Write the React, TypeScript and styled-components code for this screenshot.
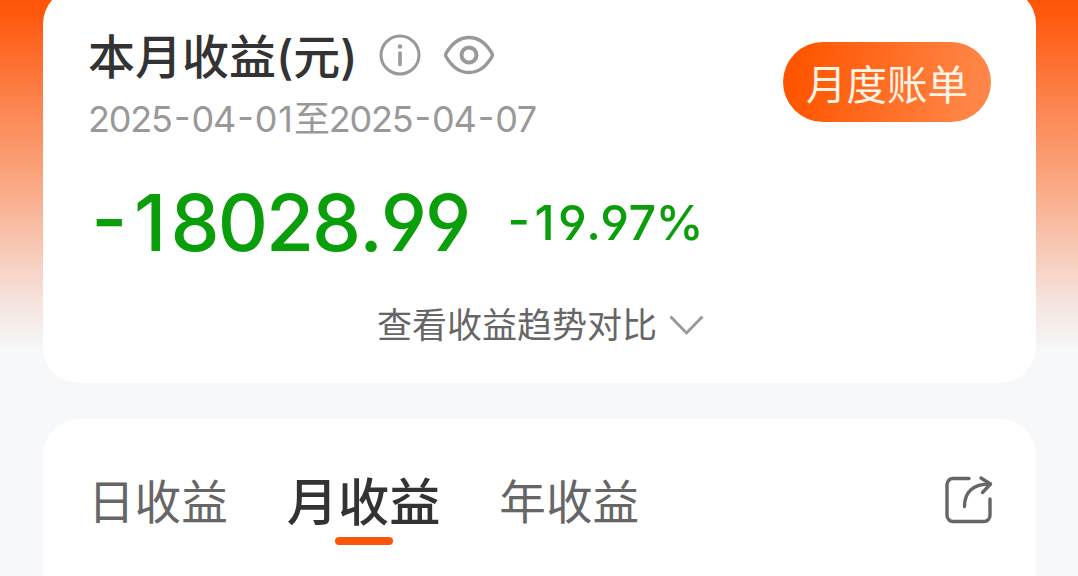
import React, { useState } from 'react';
import styled, { createGlobalStyle } from 'styled-components';

const GlobalStyle = createGlobalStyle`
  * {
    box-sizing: border-box;
  }

  body {
    margin: 0;
    overflow: hidden;
    background: #f6f8fa;
    font-family: Inter, 'Noto Sans CJK SC', sans-serif;
  }

  button {
    border: none;
    padding: 0;
    background: none;
    font-family: inherit;
    cursor: pointer;
  }
`;

const Page = styled.div`
  display: flex;
  flex-direction: column;
  gap: 36.5px;
  height: 576px;
  padding: 0 42px 0 43px;
  overflow: hidden;
  background: linear-gradient(
    180deg,
    #ff5508 0,
    #ff5a10 18px,
    #fc8753 110px,
    #faa680 180px,
    #f8c4af 240px,
    #f6e2dc 300px,
    #f6f8fa 350px
  );
`;

const Card = styled.section`
  flex-shrink: 0;
  background: #fff;
  border-radius: 36px;
`;

const SummaryCard = styled(Card)`
  height: 394.5px;
  margin-top: -12px;
  padding: 40px 45px 0 45px;
`;

const Header = styled.div`
  display: flex;
  justify-content: space-between;
  align-items: flex-start;
`;

const TitleRow = styled.div`
  display: flex;
  align-items: center;
  height: 54px;
`;

const Title = styled.h1`
  width: 291px;
  margin: 0;
  padding-top: 4px;
  color: #333;
  font-size: 47px;
  font-weight: 500;
  line-height: 54px;
  white-space: nowrap;
`;

const IconButton = styled.button<{ $gap?: number }>`
  display: flex;
  margin-left: ${({ $gap }) => $gap || 0}px;
`;

const DateRange = styled.div`
  margin-top: 16px;
  color: #999;
  font-size: 36px;
  line-height: 42px;
  letter-spacing: -1.2px;
  font-feature-settings: 'case';
  font-kerning: none;
  white-space: nowrap;
`;

const BillButton = styled.button`
  width: 208px;
  height: 80px;
  margin-top: 14px;
  padding-top: 7px;
  border-radius: 40px;
  background: linear-gradient(100deg, #ff5500 8%, #ff8648 92%);
  color: #fff3e6;
  font-size: 40.5px;
  line-height: 73px;
`;

const Figures = styled.div`
  display: flex;
  align-items: center;
  height: 80px;
  margin-top: 42px;
  color: #0a9f0a;
  font-weight: 500;
  font-feature-settings: 'case', 'cv04', 'cv09';
  font-kerning: none;
  white-space: nowrap;
`;

const Amount = styled.div`
  width: 418px;
  padding-left: 1px;
  font-size: 78px;
  letter-spacing: -2px;
`;

const Percent = styled.div`
  font-size: 48.5px;
  letter-spacing: -0.6px;
`;

// narrow glyphs get side room so the digits sit on an even pitch
const Narrow = styled.span`
  margin: 0 0.06em;

  ${Figures} & {
    margin: 0 0.08em 0 0.03em;
  }
`;

const TrendLink = styled.button`
  display: flex;
  align-items: center;
  gap: 12px;
  height: 44px;
  margin: 41px 0 0 289px;
  color: #666;
  font-size: 35px;
  line-height: 44px;
`;

const TabsCard = styled(Card)`
  display: flex;
  justify-content: space-between;
  height: 220px;
  padding: 48px 42px 0 45px;
`;

const TabList = styled.div`
  display: flex;
  gap: 59px;
`;

const Tab = styled.button<{ $active: boolean }>`
  display: flex;
  flex-direction: column;
  align-items: center;
  height: 80px;
  padding-top: 1px;
  color: ${({ $active }) => ($active ? '#333' : '#666')};
  font-size: ${({ $active }) => ($active ? 51.2 : 46.6)}px;
  font-weight: ${({ $active }) => ($active ? 500 : 400)};
  line-height: 68px;
  white-space: nowrap;

  &::after {
    content: '';
    width: 58px;
    height: 8px;
    margin-top: 1px;
    border-radius: 4px;
    background: ${({ $active }) => ($active ? '#fa560a' : 'transparent')};
  }
`;

const ShareButton = styled(IconButton)`
  align-self: flex-start;
  margin-top: 8px;
`;

const InfoIcon = () => (
  <svg width="42" height="42" viewBox="0 0 42 42" fill="none" stroke="#999">
    <circle cx="21" cy="21" r="19" strokeWidth="3" />
    <circle cx="21" cy="12.5" r="2.2" fill="#999" stroke="none" />
    <path d="M21 19v11.5" strokeWidth="3.6" strokeLinecap="round" />
  </svg>
);

const EyeIcon = () => (
  <svg width="52" height="42" viewBox="0 0 52 42" fill="none" stroke="#999" strokeWidth="3.5">
    <path d="M3 19.5C9 9 17 3.5 26 3.5s17 5.500 23 16q.8 1.5 0 3C43 33 35 38.5 26 38.5S9 33 3 22.5q-.8-1.5 0-3z" strokeLinejoin="round" />
    <circle cx="26" cy="21" r="7.5" strokeWidth="4" />
  </svg>
);

const ChevronIcon = () => (
  <svg width="35" height="22" viewBox="0 0 35 22" fill="none" stroke="#999" strokeWidth="2.8">
    <path d="M1.5 2.5 17.5 19 33.5 2.5" />
  </svg>
);

const ShareIcon = () => (
  <svg width="50" height="50" viewBox="0 0 50 50" fill="none" stroke="#666" strokeWidth="3.4" strokeLinecap="round" strokeLinejoin="round">
    <path d="M25 3.5H9a6 6 0 0 0-6 6V40.5a6 6 0 0 0 6 6H40a6 6 0 0 0 6-6V24" />
    <path d="M20.5 31.5C20.5 17 29 9 46 9" />
    <path d="M37 3 46.5 9 38.5 17.5" />
  </svg>
);

const spaced = (text: string) =>
  text.split(/([-1])/).map((part, i) => (i % 2 ? <Narrow key={i}>{part}</Narrow> : part));

const tabs = ['日收益', '月收益', '年收益'];

const App: React.FC = () => {
  const [activeTab, setActiveTab] = useState(1);

  return (
    <>
      <GlobalStyle />
      <Page>
        <SummaryCard>
          <Header>
            <div>
              <TitleRow>
                <Title>本月收益(元)</Title>
                <IconButton aria-label="说明">
                  <InfoIcon />
                </IconButton>
                <IconButton $gap={22} aria-label="隐藏金额">
                  <EyeIcon />
                </IconButton>
              </TitleRow>
              <DateRange>{spaced('2025-04-01至2025-04-07')}</DateRange>
            </div>
            <BillButton>月度账单</BillButton>
          </Header>
          <Figures>
            <Amount>{spaced('-18028.99')}</Amount>
            <Percent>{spaced('-19.97%')}</Percent>
          </Figures>
          <TrendLink>
            查看收益趋势对比
            <ChevronIcon />
          </TrendLink>
        </SummaryCard>
        <TabsCard>
          <TabList>
            {tabs.map((label, i) => (
              <Tab key={label} $active={i === activeTab} onClick={() => setActiveTab(i)}>
                {label}
              </Tab>
            ))}
          </TabList>
          <ShareButton aria-label="分享">
            <ShareIcon />
          </ShareButton>
        </TabsCard>
      </Page>
    </>
  );
};

export default App;
